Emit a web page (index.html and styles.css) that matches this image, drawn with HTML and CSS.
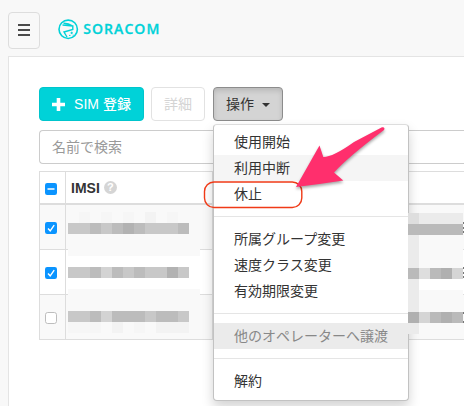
FILE: index.html
```html
<!DOCTYPE html>
<html lang="ja">
<head>
<meta charset="utf-8">
<title>SORACOM</title>
<link rel="stylesheet" href="styles.css">
</head>
<body>
<header class="topbar">
  <button class="menu-toggle" aria-label="menu"><span></span><span></span><span></span></button>
  <div class="logo">
    <svg width="104" height="22" viewBox="0 0 104 22" fill="none" stroke="#00d2d8">
      <circle cx="10.200" cy="11.300" r="9.200" stroke-width="1.600"/>
      <path d="M4.500 7L14.800 8V11.500L6 14L9 19M5.500 5.200Q10 5 14.800 8" stroke-width="1.400"/>
      <path d="M13.700 13.700v2.400M12.500 14.900h2.400M11 17.400h1.500M14.700 17.200h1" stroke-width="1"/>
      <text class="logo-text" x="25.300" y="16.300" textLength="76" lengthAdjust="spacing" stroke="none" fill="#00d2d8">SORACOM</text>
    </svg>
  </div>
</header>
<main class="panel">
  <div class="toolbar">
    <button class="btn btn-primary"><svg width="13" height="13" viewBox="0 0 13 13"><path d="M4.700 0h3.600v4.700H13v3.600H8.300V13H4.700V8.300H0V4.700h4.700z" fill="#fff"/></svg><span>SIM 登録</span></button>
    <button class="btn btn-disabled">詳細</button>
    <div class="dropdown">
      <button class="btn btn-open">操作<i class="caret"></i></button>
      <ul class="menu">
        <li>使用開始</li>
        <li class="hover">利用中断</li>
        <li>休止</li>
        <li class="divider"></li>
        <li>所属グループ変更</li>
        <li>速度クラス変更</li>
        <li>有効期限変更</li>
        <li class="divider"></li>
        <li class="disabled">他のオペレーターへ譲渡</li>
        <li class="divider"></li>
        <li>解約</li>
      </ul>
    </div>
  </div>
  <div class="search">名前で検索</div>
  <div class="table">
    <div class="row head">
      <div class="check"><svg width="12" height="12" viewBox="0 0 12 12"><rect width="12" height="12" rx="2.200" fill="#0a94ff"/><path d="M2.500 6h7" stroke="#fff" stroke-width="1.500"/></svg></div>
      <div class="cell imsi">IMSI <span class="help">?</span></div>
      <div class="cell"></div>
    </div>
    <div class="row odd">
      <div class="check"><svg width="12" height="12" viewBox="0 0 12 12"><rect width="12" height="12" rx="2.200" fill="#0a94ff"/><path d="M3 6.500L5.200 8.800L9.200 3.200" fill="none" stroke="#fff" stroke-width="1.400"/></svg></div>
      <div class="cell"></div><div class="cell"></div>
    </div>
    <div class="row">
      <div class="check"><svg width="12" height="12" viewBox="0 0 12 12"><rect width="12" height="12" rx="2.200" fill="#0a94ff"/><path d="M3 6.500L5.200 8.800L9.200 3.200" fill="none" stroke="#fff" stroke-width="1.400"/></svg></div>
      <div class="cell"></div><div class="cell"></div>
    </div>
    <div class="row odd">
      <div class="check"><svg width="12" height="12" viewBox="0 0 12 12"><rect x=".5" y=".5" width="11" height="11" rx="2.200" fill="#fff" stroke="#bdbdbd"/></svg></div>
      <div class="cell"></div><div class="cell"></div>
    </div>
  </div>
</main>
<svg class="mask mask-left" width="464" height="406" viewBox="0 0 464 406" shape-rendering="crispEdges">
  <path fill="#f9f9f9" d="M68 212h132v44H68zM68 289h132v44H68z"/>
  <path fill="#f6f6f6" d="M79 212h11v11H79zM101 212h11v11h-11zM123 212h11v11h-11zM167 212h11v11h-11zM68 322h33v11H68zM134 322h11v11h-11z"/>
  <path fill="#f3f3f3" d="M145 212h11v11h-11zM112 322h11v11h-11zM156 322h33v11h-33z"/>
  <path fill="#c8c8c8" d="M68 223h121v11H68zM68 267h121v11H68zM68 311h121v11H68z"/>
  <path fill="#bcbcbc" d="M90 223h11v11H90zM112 223h11v11h-11zM134 223h11v11h-11zM178 223h11v11h-11zM90 267h11v11H90zM112 267h11v11h-11zM134 267h11v11h-11zM90 311h11v11H90zM112 311h33v11h-33zM156 311h22v11h-22z"/>
  <path fill="#b2b2b2" d="M123 223h11v11h-11zM167 267h11v11h-11z"/>
  <path fill="#d3d3d3" d="M101 267h11v11h-11zM101 311h11v11h-11z"/>
</svg>
<svg class="mask mask-right" width="464" height="406" viewBox="0 0 464 406" shape-rendering="crispEdges">
  <path fill="#f9f9f9" d="M408 213h55v55h-55zM408 290h55v44h-55z"/>
  <path fill="#fff" d="M419 279h44v11h-44z"/>
  <path fill="#ebebeb" d="M408 213h55v11h-55zM408 235h11v99h-11z"/>
  <path fill="#dedede" d="M408 213h11v11h-11zM419 268h11v11h-11z"/>
  <path fill="#bababa" d="M408 224h55v11h-55zM408 268h11v11h-11zM430 268h11v11h-11zM430 312h11v11h-11zM452 312h11v11h-11z"/>
  <path fill="#b0b0b0" d="M408 312h11v11h-11zM441 312h11v11h-11zM441 268h11v11h-11z"/>
  <path fill="#d5d5d5" d="M419 312h11v11h-11zM452 268h11v11h-11z"/>
  <path fill="#777" d="M463 222h1v2h-1zM463 227h1v2h-1zM463 231h1v2h-1zM463 267h1v2h-1zM463 272h1v2h-1zM463 276h1v2h-1zM463 312h1v2h-1zM463 321h1v2h-1z"/>
</svg>
<svg class="mask annotation" width="464" height="406" viewBox="0 0 464 406">
  <rect x="204.500" y="182" width="97.300" height="25.500" rx="9.500" fill="none" stroke="#f03a17" stroke-width="1.400"/>
  <path class="arrow" d="M296 187L319.500 145.500L323.300 157Q333 157 354 142L382 127.300Q385.500 127 384 130Q348 157 334 172.500L343.300 180.500Q321 184 296 187Z" fill="#ff2f6d"/>
</svg>
</body>
</html>
```

FILE: styles.css
```css
* { box-sizing: border-box; }
body {
  margin: 0;
  width: 464px;
  height: 406px;
  overflow: hidden;
  position: relative;
  background: #f8f8f8;
  color: #333;
  font: 14px/20px "Liberation Sans", "Noto Sans CJK JP", sans-serif;
}
button { font: inherit; }
.topbar { display: flex; height: 56px; padding: 12px 0 0 8px; }
.menu-toggle {
  display: flex;
  flex-direction: column;
  align-items: center;
  justify-content: center;
  gap: 3px;
  width: 32px;
  height: 37px;
  padding: 0 0 2px;
  background: #f8f8f8;
  border: 1px solid #ddd;
  border-radius: 4px;
}
.menu-toggle span { width: 12px; height: 2px; background: #4a4a4a; }
.logo { margin: 6px 0 0 18px; height: 22px; }
.logo svg { display: block; }
.logo-text { font: 600 14px "Open Sans", sans-serif; stroke: #00d2d8; stroke-width: .3px; }
.panel {
  height: 360px;
  margin-left: 8px;
  padding: 30px 0 0 30px;
  background: #fff;
  border: 1px solid #e4e4e4;
  border-right: 0;
}
.toolbar { display: flex; height: 34px; }
.btn {
  display: flex;
  align-items: center;
  justify-content: center;
  height: 34px;
  padding: 0;
  border: 1px solid #ccc;
  border-radius: 4px;
  white-space: nowrap;
}
.btn-primary { width: 105px; gap: 9px; background: #00d2d8; border-color: #00c5cc; color: #fff; font-weight: 500; }
.btn-disabled { width: 54px; margin-left: 7px; background: #fff; border-color: #e2e2e2; color: #d4d4d4; }
.dropdown { position: relative; margin-left: 8px; }
.btn-open { width: 70px; gap: 8px; background: #d4d4d4; border-color: #8c8c8c; color: #333; box-shadow: inset 0 3px 5px rgba(0,0,0,.125); }
.caret { border: 4px solid transparent; border-top-color: #333; border-bottom: 0; margin-top: 2px; }
.menu {
  position: absolute;
  top: 37px;
  left: 0;
  z-index: 2;
  width: 196px;
  height: 277px;
  margin: 0;
  padding: 4px 0;
  list-style: none;
  background: #fff;
  border: 1px solid #c2c2c2;
  border-top-color: #ddd;
  border-radius: 4px;
  box-shadow: 0 6px 12px rgba(0,0,0,.175);
}
.menu li { height: 26px; padding: 3px 20px; white-space: nowrap; }
.menu .hover { background: #f5f5f5; }
.menu .disabled { background: #ebebeb; color: #888; }
.menu .divider { height: 1px; margin: 9px 0; padding: 0; background: #e5e5e5; }
.search {
  height: 34px;
  margin-top: 9px;
  padding: 6px 12px;
  border: 1px solid #ccc;
  border-right: 0;
  border-radius: 4px 0 0 4px;
  color: #999;
}
.table { margin-top: 7px; border: solid #ddd; border-width: 1px 0 0 1px; }
.row { display: grid; grid-template-columns: 26px 147px 1fr; height: 45px; border-bottom: 1px solid #ddd; }
.row.odd { background: #f9f9f9; }
.row.head { height: 33px; border-bottom-width: 2px; }
.check { display: flex; align-items: center; padding: 2px 0 0 5px; border-right: 1px solid #ddd; }
.check svg { display: block; }
.cell { border-right: 1px solid #ddd; }
.cell:last-child { border-right: 0; }
.imsi { display: flex; align-items: center; padding-left: 5px; font-weight: bold; }
.help {
  width: 13px;
  height: 13px;
  margin-left: 4px;
  border-radius: 50%;
  background: #d5d5d5;
  color: #fff;
  font-size: 11px;
  line-height: 13px;
  text-align: center;
}
.mask { position: absolute; top: 0; left: 0; pointer-events: none; }
.mask-left { z-index: 1; }
.mask-right { z-index: 3; }
.annotation { z-index: 4; }
.arrow { filter: drop-shadow(0 2px 1.500px rgba(0,0,0,.35)); }
```
